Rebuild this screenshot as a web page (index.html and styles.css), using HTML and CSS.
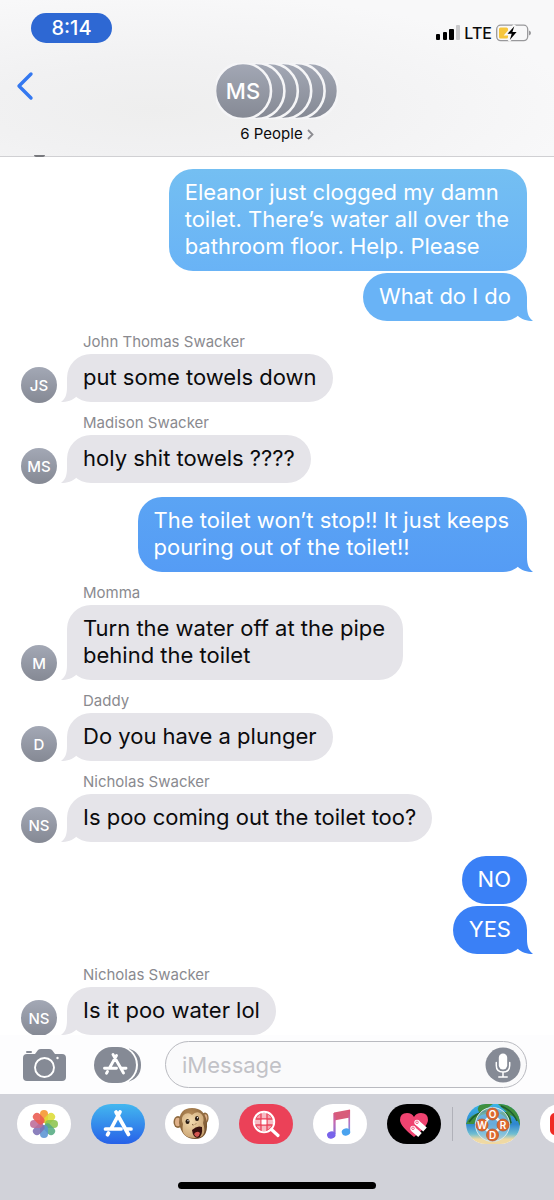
FILE: index.html
```html
<!DOCTYPE html>
<html lang="en">
<head>
    <meta charset="UTF-8">
    <meta name="viewport" content="width=device-width, initial-scale=1">
    <title>Messages</title>
    <link rel="stylesheet" href="styles.css">
</head>
<body>
<header class="header">
    <div class="status">
        <span class="time">8:14</span>
        <div class="status-right">
            <svg width="24" height="16" viewBox="0 0 24 16">
                <rect x="0" y="9" width="4" height="6" rx="1"/>
                <rect x="7" y="7" width="4" height="8" rx="1"/>
                <rect x="13" y="4" width="5" height="11" rx="1"/>
                <rect x="20" y="0" width="4" height="15" rx="1" fill="#c9c9cb"/>
            </svg>
            <span>LTE</span>
            <svg width="35" height="18" viewBox="0 0 35 18">
                <rect x="0.7" y="1.2" width="31" height="15.4" rx="4" fill="none" stroke="#98989b" stroke-width="1.3"/>
                <path d="M33 6.5q2 .6 2 2.5t-2 2.500z" fill="#98989b"/>
                <rect x="3" y="3.500" width="9" height="11" rx="1.500" fill="#f6c63c"/>
                <path d="M18.500 1 10.500 10.200h4.800L13 17l8.200-9.500h-4.600z" stroke="#f9f9f9" stroke-width="2.600"/>
                <path d="M18.300 2.200 11.500 9.800h4.200L13.800 16l6.800-8h-4.200z"/>
            </svg>
        </div>
    </div>
    <div class="nav">
        <button class="back" aria-label="Back">
            <svg width="18" height="30" viewBox="0 0 18 30"><path d="M15 3 3 15l12 12" fill="none" stroke="#3478f0" stroke-width="3.400" stroke-linecap="round" stroke-linejoin="round"/></svg>
        </button>
        <button class="group">
            <svg width="122" height="56" viewBox="0 0 122 56">
                <defs>
                    <linearGradient id="gray" x1="0" y1="0" x2="0" y2="1">
                        <stop offset="0" stop-color="#a3a8b5"/>
                        <stop offset="1" stop-color="#858994"/>
                    </linearGradient>
                </defs>
                <g fill="url(#gray)" stroke="#f5f5f7" stroke-width="2.600">
                    <circle cx="94" cy="28" r="28"/>
                    <circle cx="80.600" cy="28" r="28"/>
                    <circle cx="67.200" cy="28" r="28"/>
                    <circle cx="53.800" cy="28" r="28"/>
                    <circle cx="40.400" cy="28" r="28"/>
                    <circle cx="27" cy="28" r="28"/>
                </g>
                <text class="group-initials" x="27" y="36" text-anchor="middle">MS</text>
            </svg>
            <span class="people">6 People
                <svg width="7" height="11" viewBox="0 0 7 11"><path d="M1 1l4.500 4.500L1 10" fill="none" stroke="#8b8b90" stroke-width="1.800"/></svg>
            </span>
        </button>
    </div>
</header>

<main class="messages">
    <div class="row out first"><p class="bubble sky multi plain">Eleanor just clogged my damn<br>toilet. There’s water all over the<br>bathroom floor. Help. Please</p></div>
    <div class="row out next"><p class="bubble sky2">What do I do</p></div>

    <div class="name">John Thomas Swacker</div>
    <div class="row"><span class="avatar">JS</span><p class="bubble">put some towels down</p></div>

    <div class="name">Madison Swacker</div>
    <div class="row"><span class="avatar">MS</span><p class="bubble">holy shit towels ????</p></div>

    <div class="row out"><p class="bubble azure multi">The toilet won’t stop!! It just keeps<br>pouring out of the toilet!!</p></div>

    <div class="name">Momma</div>
    <div class="row"><span class="avatar">M</span><p class="bubble multi">Turn the water off at the pipe<br>behind the toilet</p></div>

    <div class="name">Daddy</div>
    <div class="row"><span class="avatar">D</span><p class="bubble">Do you have a plunger</p></div>

    <div class="name">Nicholas Swacker</div>
    <div class="row"><span class="avatar">NS</span><p class="bubble">Is poo coming out the toilet too?</p></div>

    <div class="row out"><p class="bubble blue plain">NO</p></div>
    <div class="row out next"><p class="bubble blue">YES</p></div>

    <div class="name">Nicholas Swacker</div>
    <div class="row"><span class="avatar">NS</span><p class="bubble">Is it poo water lol</p></div>
</main>

<form class="composer">
    <button type="button" class="camera" aria-label="Camera">
        <svg width="44" height="34" viewBox="0 0 44 34">
            <path d="M4 6h8l3-4q1-1 3-1h8q2 0 3 1l3 4h7q4 0 4 4v19q0 4-4 4H4q-4 0-4-4V10q0-4 4-4z" fill="#858a95"/>
            <rect x="3" y="3" width="6" height="2" rx="1" fill="#858a95"/>
            <circle cx="21.500" cy="19.500" r="9.500" fill="none" stroke="#fff" stroke-width="1.900"/>
            <circle cx="34.500" cy="10" r="1.200" fill="#fff"/>
        </svg>
    </button>
    <button type="button" class="apps-toggle" aria-label="Apps">
        <svg width="48" height="36" viewBox="0 0 48 36">
            <path d="M35 1.500q12 4 12 16.500T35 34.500z" fill="#858a95"/>
            <rect x="-2" y="-1" width="46" height="38" rx="19" fill="#fff"/>
            <rect x="0" y="0" width="42" height="36" rx="18" fill="#858a95"/>
            <g fill="none" stroke="#fff" stroke-width="2.900" stroke-linecap="round">
                <path d="M22.500 8.500 15.500 21M13.500 24.500l-1 1.700M19 7.500l10.500 18.500M10.500 21.200h12M28 21.200h4"/>
            </g>
        </svg>
    </button>
    <div class="field">
        <input type="text" placeholder="iMessage" aria-label="iMessage">
        <button type="button" class="mic" aria-label="Record">
            <svg width="36" height="36" viewBox="0 0 36 36">
                <circle cx="18" cy="18" r="17.500" fill="#858a95"/>
                <rect x="13.800" y="6.500" width="8.400" height="16" rx="4.200" fill="#fff"/>
                <path d="M11.300 15.500v3q0 6.500 6.700 6.500t6.700-6.500v-3M18 25v5M13.800 30h8.400" fill="none" stroke="#fff" stroke-width="1.500" stroke-linecap="round"/>
            </svg>
        </button>
    </div>
</form>

<footer class="drawer">
    <nav class="apps">
        <button class="app" aria-label="Photos">
            <svg width="54" height="40" viewBox="0 0 54 40">
                <g transform="translate(27 20)" fill-opacity=".88">
                    <rect x="-4" y="-14" width="8" height="13" rx="4" fill="#f5952b"/>
                    <rect x="-4" y="-14" width="8" height="13" rx="4" fill="#dddc35" transform="rotate(45)"/>
                    <rect x="-4" y="-14" width="8" height="13" rx="4" fill="#8cc44e" transform="rotate(90)"/>
                    <rect x="-4" y="-14" width="8" height="13" rx="4" fill="#55ab82" transform="rotate(135)"/>
                    <rect x="-4" y="-14" width="8" height="13" rx="4" fill="#5b94d4" transform="rotate(180)"/>
                    <rect x="-4" y="-14" width="8" height="13" rx="4" fill="#7c70b4" transform="rotate(225)"/>
                    <rect x="-4" y="-14" width="8" height="13" rx="4" fill="#bd6b98" transform="rotate(270)"/>
                    <rect x="-4" y="-14" width="8" height="13" rx="4" fill="#ea5a50" transform="rotate(315)"/>
                </g>
            </svg>
        </button>
        <button class="app store" aria-label="App Store">
            <svg width="54" height="40" viewBox="0 0 54 40">
                <path d="M29 8 20.500 24M17.500 29l-1 1.700M25 8l12.500 22.500M14.500 25h15.500M36 25h4" fill="none" stroke="#fff" stroke-width="3.700" stroke-linecap="round"/>
            </svg>
        </button>
        <button class="app" aria-label="Animoji">
            <svg width="54" height="40" viewBox="0 0 54 40">
                <defs>
                    <radialGradient id="fur" cx=".4" cy=".25" r=".8">
                        <stop offset="0" stop-color="#b98e5b"/>
                        <stop offset="1" stop-color="#72502c"/>
                    </radialGradient>
                    <radialGradient id="skin" cx=".4" cy=".35" r=".7">
                        <stop offset="0" stop-color="#f4dcb0"/>
                        <stop offset="1" stop-color="#c9a271"/>
                    </radialGradient>
                </defs>
                <ellipse cx="13" cy="18" rx="4.500" ry="6" fill="#8d693e"/>
                <ellipse cx="12.800" cy="18" rx="2.800" ry="4.300" fill="#dfb18a"/>
                <ellipse cx="40" cy="14" rx="3.600" ry="5.500" fill="#8d693e"/>
                <ellipse cx="40.300" cy="14" rx="2" ry="3.700" fill="#dfb18a"/>
                <path d="M14 19Q14 4 27 4t15 15q1 16-12 16T14 19z" fill="url(#fur)"/>
                <path d="M18 20q-3-7 2-10 4-2 7 1 4-4 8-2 5 3 3 10 5 15-8 15-15 0-12-14z" fill="url(#skin)"/>
                <ellipse cx="22.500" cy="17.500" rx="2" ry="2.500" fill="#251811"/>
                <ellipse cx="32" cy="14.500" rx="2" ry="2.500" fill="#251811"/>
                <circle cx="23" cy="16.700" r=".7" fill="#fff"/>
                <circle cx="32.500" cy="13.700" r=".7" fill="#fff"/>
                <path d="M27 20.500l1.500.5M31 19.500 30 20.500" stroke="#7a5637"/>
                <path d="M27 26q5-5 10-3 1 9-4 11-5 0-6-8z" fill="#38120f"/>
                <path d="M29 30q3-4 6-1-.5 3-3 4-2-.5-3-3z" fill="#d45650"/>
            </svg>
        </button>
        <button class="app images" aria-label="Images">
            <svg width="54" height="40" viewBox="0 0 54 40">
                <circle cx="25" cy="18" r="8.500" fill="#f4a3ae"/>
                <path d="M22 9h6v6h6v6h-6v6h-6v-6h-6v-6h6z" fill="#f7bcc4"/>
                <path d="M22 8v20M28 8v20M15 15h20M15 21h20" stroke="#eb4158" stroke-width="1.300"/>
                <rect x="22.600" y="15.600" width="4.800" height="4.800" fill="#fff"/>
                <circle cx="25" cy="18" r="10.200" fill="none" stroke="#fff" stroke-width="2"/>
                <path d="M32.500 25.500l6.500 6" stroke="#fff" stroke-width="3.200" stroke-linecap="round"/>
            </svg>
        </button>
        <button class="app" aria-label="Music">
            <svg width="54" height="40" viewBox="0 0 54 40">
                <defs>
                    <linearGradient id="note" x1="0" y1="6" x2="0" y2="35" gradientUnits="userSpaceOnUse">
                        <stop offset="0" stop-color="#e0506c"/>
                        <stop offset=".45" stop-color="#c16bb5"/>
                        <stop offset="1" stop-color="#6974ee"/>
                    </linearGradient>
                    <linearGradient id="note2" x1="0" y1="6" x2="0" y2="32" gradientUnits="userSpaceOnUse">
                        <stop offset="0" stop-color="#e0506c"/>
                        <stop offset=".5" stop-color="#b175c6"/>
                        <stop offset="1" stop-color="#4aa7f1"/>
                    </linearGradient>
                </defs>
                <path d="M21 8.500 37 5.500v8L21 16.500z" fill="#d85c7a"/>
                <path d="M21.500 9v21" stroke="url(#note)" stroke-width="1.800"/>
                <path d="M20.600 9h1.800v21h-1.800z" fill="url(#note)"/>
                <path d="M35.400 6h1.700v21h-1.700z" fill="url(#note2)"/>
                <ellipse cx="18.300" cy="31" rx="4.300" ry="3.500" fill="#7863ea" transform="rotate(-15 18.300 31)"/>
                <ellipse cx="33" cy="28" rx="4.300" ry="3.500" fill="#4aa3ef" transform="rotate(-15 33 28)"/>
            </svg>
        </button>
        <button class="app touch" aria-label="Digital Touch">
            <svg width="54" height="40" viewBox="0 0 54 40">
                <path d="M27 33Q13 22 13 16q0-7 7-7 5 0 7 4 2-4 7-4 7 0 7 7 0 6-14 17z" fill="#ef4370"/>
                <path d="M26 25l7 6M30 18.500l8 7" stroke="#fff" stroke-width="5.400"/>
                <circle cx="26" cy="24.500" r="2.700" fill="#fff"/>
                <circle cx="30" cy="18.500" r="2.700" fill="#fff"/>
                <circle cx="26" cy="24.300" r="1.300" fill="none" stroke="#ef4370" stroke-width=".8"/>
                <circle cx="30" cy="18.300" r="1.300" fill="none" stroke="#ef4370" stroke-width=".8"/>
            </svg>
        </button>
        <span class="divider"></span>
        <button class="app word" aria-label="Word game">
            <svg width="54" height="40" viewBox="0 0 54 40">
                <defs>
                    <linearGradient id="sea" x1="0" y1="0" x2="0" y2="1">
                        <stop offset="0" stop-color="#3cb4e7"/>
                        <stop offset=".5" stop-color="#2f86cf"/>
                        <stop offset=".75" stop-color="#70bed1"/>
                        <stop offset=".88" stop-color="#efd9a3"/>
                    </linearGradient>
                </defs>
                <rect width="54" height="40" fill="url(#sea)"/>
                <path d="M0 20Q4 10 14 9 9 4 15 0h12q-6 3-7 10-8 0-12 10zM32 0h22v22q-3-9-10-11 2 6 1 10-4-8-12-12 4-2 8-1-5-4-9-8z" fill="#3f8f3e"/>
                <path d="M3 18q6-9 17-11M35 2q11 4 16 15M39 9q5 3 6 10" fill="none" stroke="#1d5d32" stroke-width="1.500"/>
                <circle cx="26.500" cy="20.500" r="17" fill="#8fc3e2" fill-opacity=".6" stroke="#dbe9ea" stroke-width="1"/>
                <path d="M26.500 10 37 21 26.500 31 16 21z" fill="none" stroke="#f3f6f2" stroke-width="3"/>
                <g fill="#dd692f" stroke="#b75129" stroke-width=".7">
                    <circle cx="26.500" cy="10" r="6"/><circle cx="16" cy="21" r="6"/>
                    <circle cx="37" cy="21" r="6"/><circle cx="26.500" cy="31" r="6"/>
                </g>
                <g class="tiles" text-anchor="middle">
                    <text x="26.500" y="13.500">O</text><text x="16" y="24.500">W</text>
                    <text x="37" y="24.500">R</text><text x="26.500" y="34.500">D</text>
                </g>
            </svg>
        </button>
        <button class="app" aria-label="YouTube">
            <svg width="54" height="40" viewBox="0 0 54 40"><rect x="10" y="9" width="34" height="22" rx="5" fill="#ef2b24"/><path d="M24 15l9 5.500-9 5.500z" fill="#fff"/></svg>
        </button>
    </nav>
    <div class="home-bar"></div>
</footer>
</body>
</html>
```
FILE: styles.css
```css
*{
    box-sizing: border-box;
    padding: 0;
    margin: 0;
}
body{
    min-height: 100vh;
    display: flex;
    flex-direction: column;
    overflow-x: hidden;
    font-family: Inter, "Liberation Sans", sans-serif;
    color: #0b0b0d;
    background: #fff;
}
button{
    border: 0;
    background: none;
    font: inherit;
    color: inherit;
    cursor: pointer;
}
svg{
    display: block;
    flex: none;
}

/* header */
.header{
    position: relative;
    height: 157px;
    border-bottom: 1px solid #d0d0d3;
    background: radial-gradient(ellipse at 28% 70%, #eeeeee 0, #f1f1f2 30%, #f8f8f9 75%);
}
/* avatar of the message scrolled under the header */
.header::after{
    content: "";
    position: absolute;
    left: 34px;
    bottom: -1px;
    width: 11px;
    height: 2px;
    border-radius: 0 0 6px 6px;
    background: #77787d;
}
.status{
    display: flex;
    justify-content: space-between;
    padding: 13px 23px 0 31px;
}
.time{
    width: 81px;
    height: 30px;
    border-radius: 15px;
    background: #2e68d3;
    color: #fff;
    font-size: 20px;
    font-weight: 500;
    line-height: 30px;
    text-align: center;
}
.status-right{
    display: flex;
    align-items: center;
    gap: 4px;
    padding-top: 10px;
    font-size: 16px;
    font-weight: 500;
}
.nav{
    display: grid;
    grid-template-columns: 1fr auto 1fr;
    align-items: start;
    padding: 20px 16px 0;
}
.back{
    justify-self: start;
    padding-top: 8px;
}
.group{
    display: flex;
    flex-direction: column;
    align-items: center;
    gap: 6px;
}
.group-initials{
    font-size: 22px;
    font-weight: 500;
    fill: #fff;
}
.people{
    display: flex;
    align-items: center;
    gap: 4px;
    font-size: 15px;
    line-height: 18px;
}

/* conversation */
.messages{
    flex: 1;
    padding: 0 27px 0 21px;
}
.row{
    display: flex;
    align-items: flex-end;
    gap: 10px;
}
.out{
    justify-content: flex-end;
    margin-top: 14px;
}
.first{
    margin-top: 12px;
}
.next{
    margin-top: 2px;
}
.name{
    height: 33px;
    padding: 12px 0 0 62px;
    font-size: 15px;
    line-height: 18px;
    color: #8a8a8f;
}
.avatar{
    flex: none;
    width: 36px;
    height: 36px;
    margin-bottom: -1px;
    border-radius: 50%;
    background: linear-gradient(#a3a8b5, #858994);
    color: #fff;
    font-size: 15px;
    font-weight: 500;
    line-height: 37px;
    text-align: center;
}
.bubble{
    position: relative;
    padding: 10px 16px 11px;
    border-radius: 24px;
    background: #e5e4e9;
    font-size: 22px;
    line-height: 27px;
}
.multi{
    padding-right: 18px;
}
/* tail */
.bubble::after{
    content: "";
    position: absolute;
    z-index: -1;
    left: -6px;
    bottom: 0;
    width: 24px;
    height: 24px;
    background: #e5e4e9;
    clip-path: path("M6 0V9C6 17 4 21 0 24C6 24 12 22 15 19L24 8V0Z");
}
.out .bubble{
    color: #fff;
}
.out .bubble::after{
    left: auto;
    right: -6px;
    transform: scaleX(-1);
}
.out .plain::after{
    display: none;
}
.sky{
    background: linear-gradient(#74bff2, #69b3f6);
}
.sky2, .out .sky2::after{
    background: #69b3f6;
}
.azure{
    background: linear-gradient(#5ba4f4, #559cf5);
}
.out .azure::after{
    background: #559cf5;
}
.blue, .out .blue::after{
    background: #3a80f6;
}

/* composer */
.composer{
    position: relative;
    display: flex;
    align-items: center;
    height: 59px;
    padding: 0 27px 0 23px;
    background: #fdfdfe;
}
.apps-toggle{
    margin: 0 23px 0 27px;
}
.field{
    flex: 1;
    min-width: 0;
    display: flex;
    align-items: center;
    height: 47px;
    padding: 0 5px 0 16px;
    border: 1px solid #b9bac0;
    border-radius: 24px;
    background: #fafafb;
}
.field input{
    flex: 1;
    min-width: 0;
    border: 0;
    outline: 0;
    background: none;
    font: inherit;
    font-size: 22px;
}
.field input::placeholder{
    color: #c2c2c7;
    opacity: 1;
}

/* app drawer */
.drawer{
    height: 106px;
    padding-top: 10px;
    background: #d1d2d9;
    overflow: hidden;
}
.apps{
    display: flex;
    align-items: center;
    gap: 20px;
    padding-left: 17px;
}
.app{
    flex: none;
    width: 54px;
    height: 40px;
    border-radius: 20px;
    background: #fff;
    overflow: hidden;
}
.store{
    background: linear-gradient(#43b7ef, #2761e8);
}
.images{
    background: #eb4158;
}
.touch{
    background: #000;
}
.divider{
    flex: none;
    width: 1px;
    height: 34px;
    margin: 0 -7px 0 -9px;
    background: #b0b1b9;
}
.tiles{
    font-size: 10px;
    font-weight: 600;
    fill: #fff;
}
.home-bar{
    width: 198px;
    height: 7px;
    margin: 38px auto 0;
    border-radius: 4px;
    background: #000;
}
```
